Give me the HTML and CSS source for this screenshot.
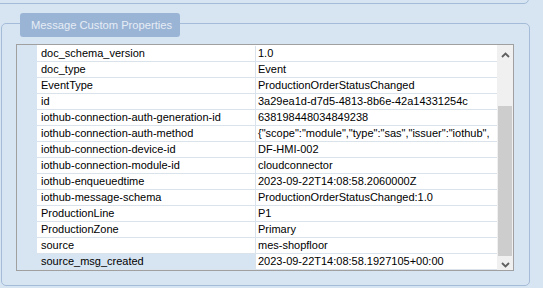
FILE: index.html
```html
<!DOCTYPE html>
<html>
<head>
<meta charset="utf-8">
<link rel="stylesheet" href="styles.css">
</head>
<body>
<div class="topbox"></div>
<div class="group">
  <div class="badge">Message Custom Properties</div>
  <div class="grid">
    <div class="rowheads"></div>
    <div class="body">
      <div class="row"><div class="name">doc_schema_version</div><div class="val">1.0</div></div>
      <div class="row"><div class="name">doc_type</div><div class="val">Event</div></div>
      <div class="row"><div class="name">EventType</div><div class="val">ProductionOrderStatusChanged</div></div>
      <div class="row"><div class="name">id</div><div class="val">3a29ea1d-d7d5-4813-8b6e-42a14331254c</div></div>
      <div class="row"><div class="name">iothub-connection-auth-generation-id</div><div class="val">638198448034849238</div></div>
      <div class="row"><div class="name">iothub-connection-auth-method</div><div class="val">{"scope":"module","type":"sas","issuer":"iothub",</div></div>
      <div class="row"><div class="name">iothub-connection-device-id</div><div class="val">DF-HMI-002</div></div>
      <div class="row"><div class="name">iothub-connection-module-id</div><div class="val">cloudconnector</div></div>
      <div class="row"><div class="name">iothub-enqueuedtime</div><div class="val">2023-09-22T14:08:58.2060000Z</div></div>
      <div class="row"><div class="name">iothub-message-schema</div><div class="val">ProductionOrderStatusChanged:1.0</div></div>
      <div class="row"><div class="name">ProductionLine</div><div class="val">P1</div></div>
      <div class="row"><div class="name">ProductionZone</div><div class="val">Primary</div></div>
      <div class="row"><div class="name">source</div><div class="val">mes-shopfloor</div></div>
      <div class="row current"><div class="name">source_msg_created</div><div class="val">2023-09-22T14:08:58.1927105+00:00</div></div>
    </div>
    <div class="scrollbar">
      <div class="sbtn up"><svg width="9" height="6" viewBox="0 0 9 6"><path d="M1 5 L4.5 1.5 L8 5" fill="none" stroke="#606060" stroke-width="1.8"/></svg></div>
      <div class="track"></div>
      <div class="thumb"></div>
      <div class="sbtn down"><svg width="9" height="6" viewBox="0 0 9 6"><path d="M1 1 L4.5 4.5 L8 1" fill="none" stroke="#606060" stroke-width="1.8"/></svg></div>
    </div>
  </div>
</div>
</body>
</html>
```
FILE: styles.css
```css
html, body {
  margin: 0;
  padding: 0;
}
body {
  background: #d7e4f2;
  width: 543px;
  height: 288px;
  overflow: hidden;
  font-family: "Liberation Sans", Arial, sans-serif;
  font-size: 11px;
  color: #000;
}
.topbox {
  box-sizing: border-box;
  width: 535px;
  height: 14px;
  margin-top: -10px;
  margin-left: -6px;
  border: 1px solid #a4bcd8;
  border-radius: 5px;
}
.group {
  position: relative;
  box-sizing: border-box;
  width: 529px;
  height: 263px;
  margin-top: 19px;
  margin-left: 1px;
  border: 1px solid #a4bcd8;
  border-radius: 5px;
  padding: 20px 0 0 14px;
}
.badge {
  position: absolute;
  left: 18px;
  top: -11px;
  width: 160px;
  height: 24px;
  box-sizing: border-box;
  background: #9ab4d5;
  border-radius: 3px;
  color: #e6edf6;
  font-size: 11.2px;
  line-height: 24px;
  padding-left: 11px;
}
.grid {
  display: flex;
  width: 498px;
  height: 227px;
  box-sizing: border-box;
  border: 1px solid #a0a0a0;
  background: #fff;
}
.rowheads {
  width: 20px;
  background: #d7e4f2;
  flex: none;
}
.body {
  width: 460px;
  flex: none;
  padding-top: 1px;
  overflow: hidden;
}
.row {
  display: flex;
  height: 16px;
  box-sizing: border-box;
  border-bottom: 1px solid #dae2eb;
}
.name {
  width: 219px;
  flex: none;
  box-sizing: border-box;
  padding-left: 4px;
  line-height: 15px;
  border-right: 1px solid #dae2eb;
  white-space: nowrap;
  overflow: hidden;
}
.val {
  width: 240px;
  flex: none;
  box-sizing: border-box;
  padding-left: 2px;
  line-height: 15px;
  white-space: nowrap;
  overflow: hidden;
}
.row.current .name {
  background: #d7e4f2;
}
.scrollbar {
  width: 16px;
  flex: none;
  background: #f0f0f0;
  display: flex;
  flex-direction: column;
}
.sbtn {
  height: 17px;
  flex: none;
  display: flex;
  align-items: center;
  justify-content: center;
}
.sbtn.up { padding-top: 1px; }
.sbtn.down { height: 15px; padding-top: 1px; }
.track {
  height: 43px;
  flex: none;
}
.thumb {
  height: 150px;
  flex: none;
  margin: 0 1px;
  background: #cdcdcd;
}
```
